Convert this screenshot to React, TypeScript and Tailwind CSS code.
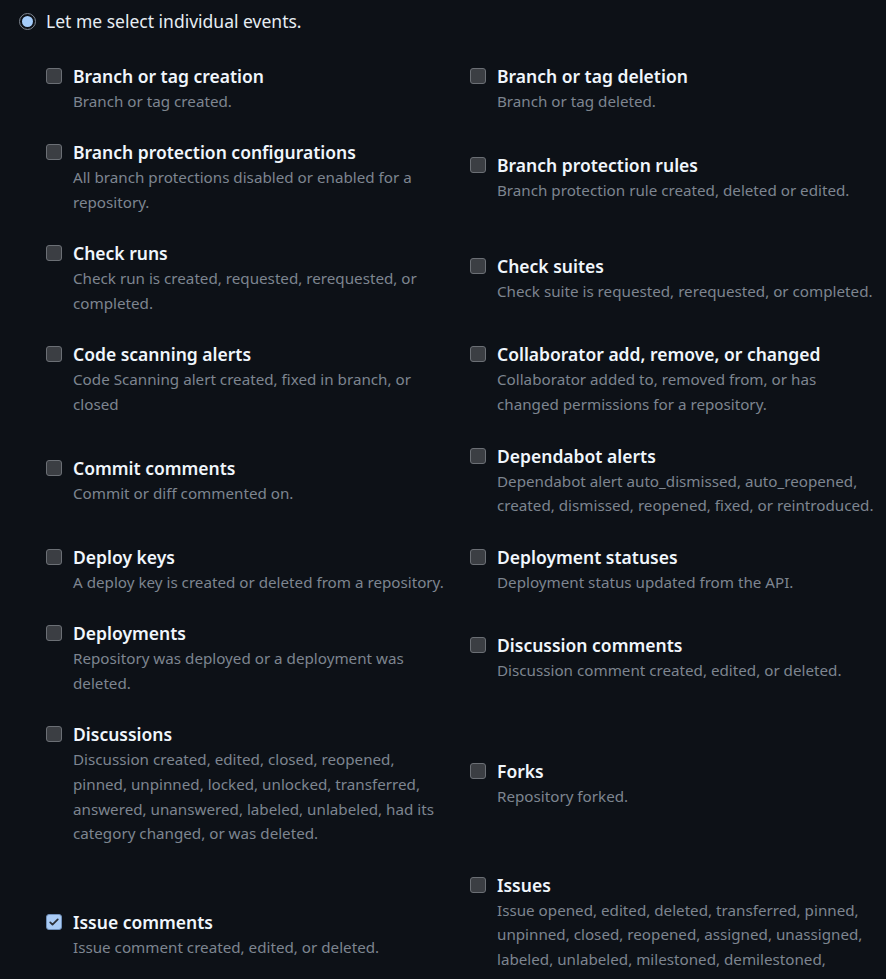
import React from 'react';

type Event = {
  title: string;
  desc: string[];
  checked?: boolean;
};

const rows: [Event, Event][] = [
  [
    { title: 'Branch or tag creation', desc: ['Branch or tag created.'] },
    { title: 'Branch or tag deletion', desc: ['Branch or tag deleted.'] },
  ],
  [
    {
      title: 'Branch protection configurations',
      desc: ['All branch protections disabled or enabled for a', 'repository.'],
    },
    { title: 'Branch protection rules', desc: ['Branch protection rule created, deleted or edited.'] },
  ],
  [
    { title: 'Check runs', desc: ['Check run is created, requested, rerequested, or', 'completed.'] },
    { title: 'Check suites', desc: ['Check suite is requested, rerequested, or completed.'] },
  ],
  [
    { title: 'Code scanning alerts', desc: ['Code Scanning alert created, fixed in branch, or', 'closed'] },
    {
      title: 'Collaborator add, remove, or changed',
      desc: ['Collaborator added to, removed from, or has', 'changed permissions for a repository.'],
    },
  ],
  [
    { title: 'Commit comments', desc: ['Commit or diff commented on.'] },
    {
      title: 'Dependabot alerts',
      desc: [
        'Dependabot alert auto_dismissed, auto_reopened,',
        'created, dismissed, reopened, fixed, or reintroduced.',
      ],
    },
  ],
  [
    { title: 'Deploy keys', desc: ['A deploy key is created or deleted from a repository.'] },
    { title: 'Deployment statuses', desc: ['Deployment status updated from the API.'] },
  ],
  [
    { title: 'Deployments', desc: ['Repository was deployed or a deployment was', 'deleted.'] },
    { title: 'Discussion comments', desc: ['Discussion comment created, edited, or deleted.'] },
  ],
  [
    {
      title: 'Discussions',
      desc: [
        'Discussion created, edited, closed, reopened,',
        'pinned, unpinned, locked, unlocked, transferred,',
        'answered, unanswered, labeled, unlabeled, had its',
        'category changed, or was deleted.',
      ],
    },
    { title: 'Forks', desc: ['Repository forked.'] },
  ],
  [
    { title: 'Issue comments', desc: ['Issue comment created, edited, or deleted.'], checked: true },
    {
      title: 'Issues',
      desc: [
        'Issue opened, edited, deleted, transferred, pinned,',
        'unpinned, closed, reopened, assigned, unassigned,',
        'labeled, unlabeled, milestoned, demilestoned,',
        'locked, or unlocked.',
      ],
    },
  ],
];

function Checkbox({ checked }: { checked?: boolean }) {
  if (checked) {
    return (
      <span className="mt-[5px] flex h-4 w-4 flex-shrink-0 items-center justify-center rounded-[3px] border border-[#6f8fb8] bg-[#a9cbf5]">
        <svg viewBox="0 0 16 16" className="h-3 w-3">
          <path
            d="M3 8.5l3 3 7-7"
            fill="none"
            stroke="#2b3038"
            strokeWidth="2.4"
            strokeLinecap="round"
            strokeLinejoin="round"
          />
        </svg>
      </span>
    );
  }
  return (
    <span className="mt-[5px] h-4 w-4 flex-shrink-0 rounded-[3px] border border-[#6b6f75] bg-[#3b3e43]" />
  );
}

function EventItem({ event }: { event: Event }) {
  return (
    <div className="flex items-start gap-[11px] py-[12.85px]">
      <Checkbox checked={event.checked} />
      <div>
        <div className="text-[17.5px] font-semibold leading-[26px] text-[#f0f6fc] whitespace-nowrap">
          {event.title}
        </div>
        {event.desc.map((line) => (
          <div key={line} className="text-[15.2px] leading-[24.7px] text-[#7d8590] whitespace-nowrap">
            {line}
          </div>
        ))}
      </div>
    </div>
  );
}

export default function App() {
  return (
    <div
      className="h-[979px] w-[886px] overflow-hidden bg-[#0d1117] pt-[8px]"
      style={{ fontFamily: '"Segoe UI", "Noto Sans", "Liberation Sans", sans-serif' }}
    >
      {/* Radio option */}
      <div className="flex items-center gap-[10px] pl-[19px]">
        <span className="flex h-[17px] w-[17px] items-center justify-center rounded-full border-[1.5px] border-[#7d8590]">
          <span className="h-[11px] w-[11px] rounded-full bg-[#a5cdfb]" />
        </span>
        <span className="text-[17.5px] leading-[26px] text-[#e6edf3]">Let me select individual events.</span>
      </div>

      {/* Event list */}
      <div className="mt-[16px] grid grid-cols-[424px_424px] items-center pl-[46px]">
        {rows.map(([left, right]) => (
          <React.Fragment key={left.title}>
            <EventItem event={left} />
            <EventItem event={right} />
          </React.Fragment>
        ))}
      </div>
    </div>
  );
}
